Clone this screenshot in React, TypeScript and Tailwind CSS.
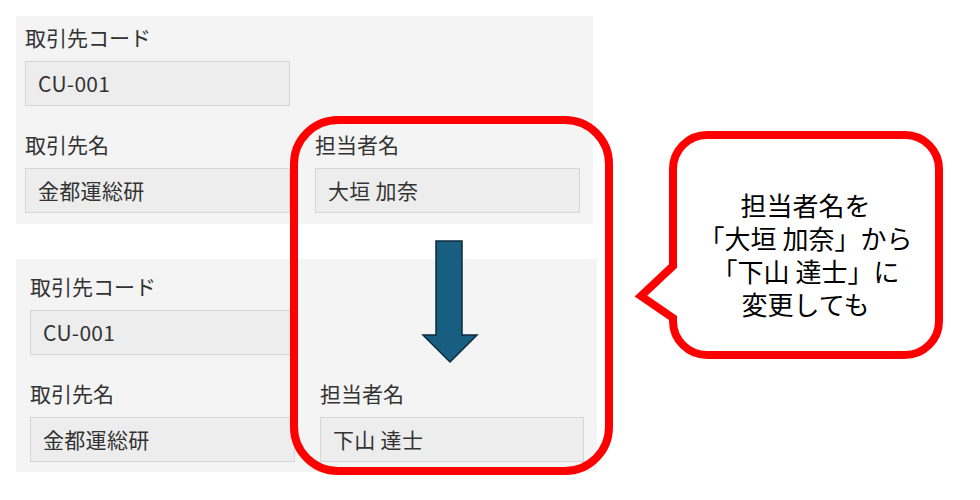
const FONT = { fontFamily: '"Noto Sans CJK JP", "Noto Sans", sans-serif' };

type FieldProps = { label: string; value: string };

function Field({ label, value }: FieldProps) {
  return (
    <div>
      <div className="h-7 text-[21px] leading-7 text-[#333]">{label}</div>
      <div className="mt-[10px] h-[45px] border border-[#d6d6d6] bg-[#ededed] px-[12px] text-[21px] leading-[43px] tracking-[0.3px] text-[#333]">
        {value}
      </div>
    </div>
  );
}

export default function App() {
  return (
    <div className="relative h-[500px] w-[980px] overflow-hidden bg-white" style={FONT}>
      {/* before */}
      <div className="ml-4 mt-4 grid w-[577px] grid-cols-[265px_265px] gap-x-[25px] gap-y-6 bg-[#f4f4f4] pb-[11px] pl-[9px] pr-[13px] pt-[7px]">
        <Field label="取引先コード" value="CU-001" />
        <div />
        <Field label="取引先名" value="金都運総研" />
        <Field label="担当者名" value="大垣 加奈" />
      </div>

      {/* after */}
      <div className="ml-4 mt-[35px] grid w-[581px] grid-cols-[265px_264px] gap-x-[25px] gap-y-6 bg-[#f4f4f4] pb-[10px] pl-[14px] pr-[13px] pt-[13px]">
        <Field label="取引先コード" value="CU-001" />
        <div />
        <Field label="取引先名" value="金都運総研" />
        <Field label="担当者名" value="下山 達士" />
      </div>

      {/* highlight frame */}
      <div className="pointer-events-none absolute left-[290px] top-[116px] h-[359px] w-[323px] rounded-[48px] border-[8px] border-[#ff0000]" />

      <svg className="pointer-events-none absolute left-0 top-0" width="980" height="500">
        {/* down arrow */}
        <polygon
          points="436,241 462,241 462,335 477,335 450,362 423,335 436,335"
          fill="#175e80"
          stroke="#0d2a3b"
          strokeWidth="1.5"
        />
        {/* speech bubble */}
        <path
          d="M 707 135 H 905 A 34 34 0 0 1 939 169 V 321 A 34 34 0 0 1 905 355 H 707 A 34 34 0 0 1 673 321 V 318 L 641 296 L 673 266 V 169 A 34 34 0 0 1 707 135 Z"
          fill="#fff"
          stroke="#ff0000"
          strokeWidth="8"
          strokeLinejoin="miter"
        />
      </svg>

      <div className="absolute left-[668px] top-[188px] w-[275px] text-center text-[26px] leading-[33px] text-black">
        <div>担当者名を</div>
        <div>「大垣 加奈」から</div>
        <div>「下山 達士」に</div>
        <div>変更しても</div>
      </div>
    </div>
  );
}
